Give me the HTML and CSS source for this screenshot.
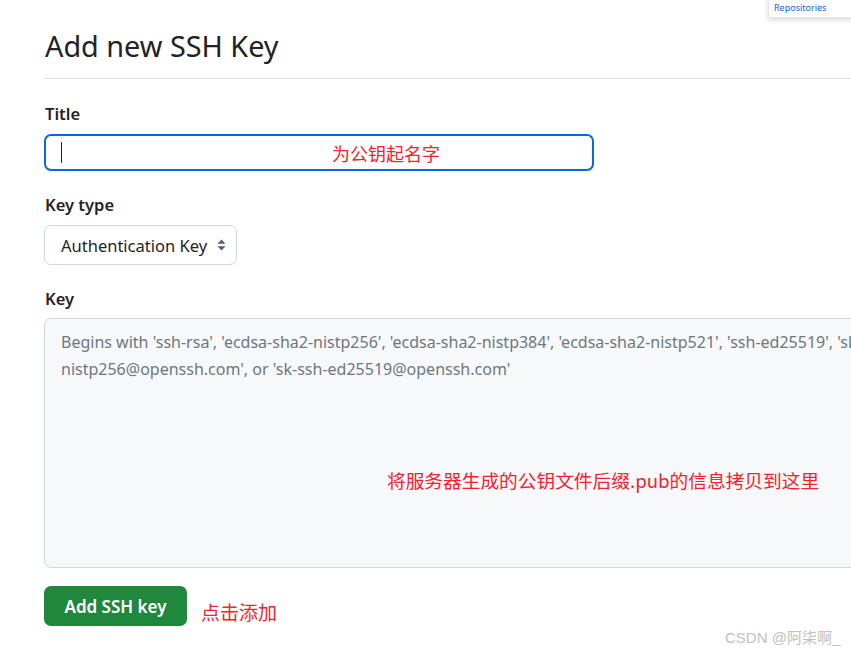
FILE: index.html
```html
<!DOCTYPE html>
<html lang="zh">
<head>
<meta charset="utf-8">
<title>Add new SSH Key</title>
<link rel="stylesheet" href="styles.css">
</head>
<body>
<div class="page">
  <h2 class="heading">Add new SSH Key</h2>
  <form class="form">
    <div class="group">
      <label class="label">Title</label>
      <div class="input">
        <span class="caret"></span>
        <span class="note note-title">为公钥起名字</span>
      </div>
    </div>
    <div class="group">
      <label class="label">Key type</label>
      <div class="select">
        <span>Authentication Key</span>
        <svg class="arrows" width="9" height="12" viewBox="0 0 9 12"><path d="M4.5 0.5 L8.5 4.8 H0.5 Z M4.5 11.5 L8.5 7.2 H0.5 Z" fill="#57606a"/></svg>
      </div>
    </div>
    <div class="group group-last">
      <label class="label label-key">Key</label>
      <div class="textarea">
        <p class="placeholder">Begins with 'ssh-rsa', 'ecdsa-sha2-nistp256', 'ecdsa-sha2-nistp384', 'ecdsa-sha2-nistp521', 'ssh-ed25519', 'sk-ecdsa-sha2-nistp256@openssh.com', or 'sk-ssh-ed25519@openssh.com'</p>
        <p class="note note-key">将服务器生成的公钥文件后缀.pub的信息拷贝到这里</p>
      </div>
    </div>
    <div class="actions">
      <button type="button" class="btn">Add SSH key</button>
      <span class="note note-btn">点击添加</span>
    </div>
  </form>
</div>
<div class="popup"><span>Repositories</span></div>
<div class="watermark">CSDN @阿柒啊_</div>
</body>
</html>
```
FILE: styles.css
```css
html, body {
  margin: 0;
  padding: 0;
  background: #ffffff;
  overflow: hidden;
  width: 851px;
  height: 651px;
}
body {
  font-family: "Noto Sans", "Noto Sans CJK SC", sans-serif;
  color: #1f2328;
  position: relative;
}
.page {
  width: 1100px;
  padding: 27px 0 0 44px;
}
.heading {
  margin: 0;
  font-size: 28.8px;
  font-weight: 400;
  line-height: 37px;
  padding: 0 0 14px 1px;
  border-bottom: 1px solid #d8dee4;
}
.form {
  padding-top: 23px;
}
.group {
  margin-bottom: 22px;
}
.group-last {
  margin-bottom: 0;
}
.label {
  display: block;
  font-size: 16.5px;
  font-weight: 600;
  line-height: 24px;
  margin: 0 0 8px 1px;
}
.label-key {
  margin-bottom: 7px;
}
.input {
  width: 546px;
  height: 33px;
  border: 2px solid #0969da;
  border-radius: 7px;
  display: flex;
  align-items: center;
}
.caret {
  display: block;
  width: 1px;
  height: 21px;
  background: #1f2328;
  margin-left: 15px;
}
.note {
  color: #f5222d;
  font-family: "Noto Sans CJK SC", sans-serif;
  font-size: 18px;
}
.note-title {
  margin-left: 270px;
}
.select {
  box-sizing: border-box;
  width: 193px;
  height: 40px;
  border: 1px solid #d0d7de;
  border-radius: 7px;
  display: flex;
  align-items: center;
  justify-content: space-between;
  padding: 0 10px 0 16px;
  font-size: 16.5px;
  color: #1f2328;
}
.arrows {
  display: block;
}
.textarea {
  width: 1010px;
  height: 250px;
  box-sizing: border-box;
  background: #f6f8fa;
  border: 1px solid #d0d7de;
  border-radius: 7px;
  padding: 10px 16px;
}
.placeholder {
  margin: 0;
  font-size: 16px;
  line-height: 27px;
  color: #6e7781;
}
.note-key {
  margin: 84px 0 0 326px;
  font-size: 18.7px;
  line-height: 26px;
}
.actions {
  display: flex;
  align-items: center;
  gap: 14px;
  margin-top: 18px;
}
.btn {
  width: 143px;
  height: 40px;
  background: #1f883d;
  color: #ffffff;
  border: 0;
  border-radius: 7px;
  font-family: "Noto Sans", sans-serif;
  font-size: 17px;
  font-weight: 600;
}
.note-btn {
  font-size: 19px;
  margin-top: 10px;
}
.popup {
  position: absolute;
  top: -4px;
  left: 768px;
  width: 90px;
  height: 22px;
  background: #ffffff;
  border: 1px solid #e4e7ea;
  box-shadow: 0 2px 5px rgba(0,0,0,0.15);
  box-sizing: border-box;
  padding: 4px 0 0 5px;
  font-size: 9px;
  color: #0969da;
}
.watermark {
  position: absolute;
  left: 725px;
  top: 626px;
  font-family: "Liberation Sans", "Noto Sans CJK SC", sans-serif;
  font-size: 15px;
  color: #c0c0c0;
}
```
